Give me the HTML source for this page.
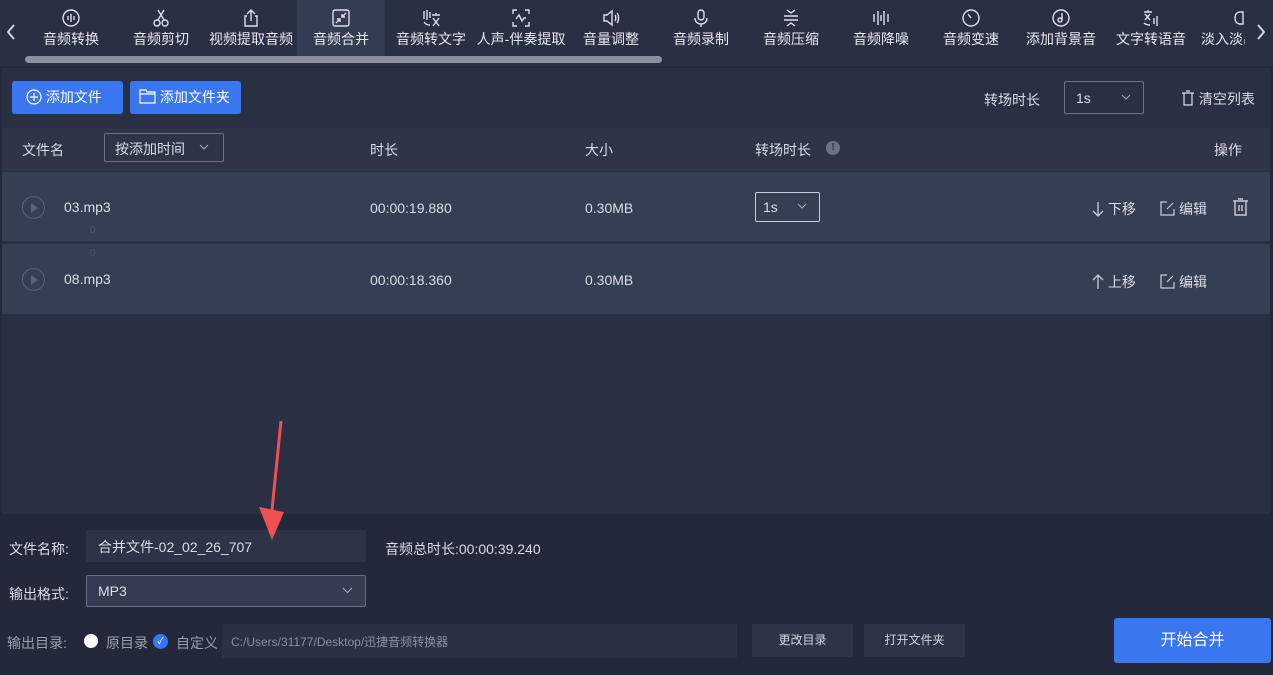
<!DOCTYPE html>
<html><head><meta charset="utf-8"><style>
*{margin:0;padding:0;box-sizing:border-box}
body{width:1273px;height:675px;background:#23283b;font-family:"Liberation Sans","Noto Sans CJK SC",sans-serif;color:#d8dce6;position:relative;overflow:hidden;font-size:14px}
.a{position:absolute}
.nav{left:0;top:0;width:1273px;height:66px;background:#2a3044}
.it{position:absolute;top:0;width:90px;height:56px;text-align:center;font-size:14px;color:#e6e8ee;white-space:nowrap}
.it svg{display:block;margin:8px auto 1px;width:20px;height:20px}
.act{background:#343c52}
.panel{left:2px;top:68px;width:1268px;height:446px;background:#2a3044}
.btn{background:#3a76f0;color:#fff;border-radius:3px;font-size:14px;line-height:33px;height:33px}
.row{left:2px;width:1268px;background:#363e53}
.gb{background:#2e3447;color:#d0d4de;font-size:12px;text-align:center;line-height:33px;height:33px;border-radius:2px}
.chev{position:absolute;right:12px;top:50%;margin-top:-4px}
</style></head><body>
<div class="a nav">
<svg class="a" style="left:6px;top:24px" width="10" height="16" viewBox="0 0 10 16" fill="none" stroke="#dde" stroke-width="1.8"><path d="M8 1L2 8l6 7"/></svg>
<svg class="a" style="left:1256px;top:24px" width="10" height="16" viewBox="0 0 10 16" fill="none" stroke="#dde" stroke-width="1.8"><path d="M2 1l6 7-6 7"/></svg>
<div class="it" style="left:26px"><svg viewBox="0 0 20 20" fill="none" stroke="#dde" stroke-width="1.4"><circle cx="10" cy="10" r="8"/><path d="M7 8v4M10 6v8M13 8v4"/></svg>音频转换</div>
<div class="it" style="left:116px"><svg viewBox="0 0 20 20" fill="none" stroke="#dde" stroke-width="1.4"><circle cx="6" cy="15" r="3"/><circle cx="14" cy="15" r="3"/><path d="M7 12L13 2M13 12L7 2"/></svg>音频剪切</div>
<div class="it" style="left:206px"><svg viewBox="0 0 20 20" fill="none" stroke="#dde" stroke-width="1.4"><path d="M6 8H4v10h12V8h-2M10 13V2M6 6l4-4 4 4"/></svg>视频提取音频</div>
<div class="it act" style="left:297px;width:88px"><svg viewBox="0 0 20 20" fill="none" stroke="#dde" stroke-width="1.4"><rect x="2" y="2" width="16" height="16" rx="2"/><path d="M15 5l-4 4M11 6v3h3M5 15l4-4M6 11h3v3"/></svg>音频合并</div>
<div class="it" style="left:386px"><svg viewBox="0 0 20 20" fill="none" stroke="#dde" stroke-width="1.4"><path d="M3 3v8M6 2v10M9 4v6M3 14c2 3 4 3 6 3M11 7h8M15 5v2M12 10l6 8M18 10l-6 8"/></svg>音频转文字</div>
<div class="it" style="left:476px"><svg viewBox="0 0 20 20" fill="none" stroke="#dde" stroke-width="1.4"><path d="M2 6V2h4M14 2h4v4M2 14v4h4M14 18h4v-4M5 11l3-4 3 6 2-3h2"/></svg>人声-伴奏提取</div>
<div class="it" style="left:566px"><svg viewBox="0 0 20 20" fill="none" stroke="#dde" stroke-width="1.4"><path d="M3 7h3l5-4v14l-5-4H3zM14 7c1 1 1 5 0 6M16 5c2 2 2 8 0 10"/></svg>音量调整</div>
<div class="it" style="left:656px"><svg viewBox="0 0 20 20" fill="none" stroke="#dde" stroke-width="1.4"><rect x="7" y="2" width="6" height="10" rx="3"/><path d="M4 10c0 4 3 6 6 6s6-2 6-6M10 16v3"/></svg>音频录制</div>
<div class="it" style="left:746px"><svg viewBox="0 0 20 20" fill="none" stroke="#dde" stroke-width="1.4"><path d="M6 2l4 3 4-3M3 8h14M3 12h14M6 18l4-3 4 3"/></svg>音频压缩</div>
<div class="it" style="left:836px"><svg viewBox="0 0 20 20" fill="none" stroke="#dde" stroke-width="1.4"><path d="M3 6v8M7 3v14M10 7v6M13 3v14M17 6v8"/></svg>音频降噪</div>
<div class="it" style="left:926px"><svg viewBox="0 0 20 20" fill="none" stroke="#dde" stroke-width="1.4"><circle cx="10" cy="10" r="8"/><path d="M7 6l3 4"/></svg>音频变速</div>
<div class="it" style="left:1016px"><svg viewBox="0 0 20 20" fill="none" stroke="#dde" stroke-width="1.4"><circle cx="10" cy="10" r="8"/><circle cx="9" cy="12" r="2"/><path d="M11 12V5"/></svg>添加背景音</div>
<div class="it" style="left:1106px"><svg viewBox="0 0 20 20" fill="none" stroke="#dde" stroke-width="1.4"><path d="M3 4h8M7 2v2M4 6l5 6M9 6l-5 6M3 15c2 2 4 2 6 2M13 10v6M16 8v10"/></svg>文字转语音</div>
<div class="it" style="left:1196px;width:54px;overflow:hidden;text-align:left;padding-left:5px"><svg viewBox="0 0 20 20" fill="none" stroke="#dde" stroke-width="1.4" style="margin:8px 0 1px 30px"><path d="M8 4c-3 1-4 3-4 6s1 5 4 6M8 4h4v12H8"/></svg><span style="display:inline-block;width:44px;overflow:hidden">淡入淡出</span></div>
<div class="a" style="left:25px;top:56px;width:637px;height:7px;border-radius:4px;background:#8b91a1"></div>
</div>
<div class="a panel"></div>
<div class="a btn" style="left:12px;top:81px;width:111px;padding-left:14px"><svg width="16" height="16" viewBox="0 0 16 16" style="vertical-align:-3px" fill="none" stroke="#fff" stroke-width="1.2"><circle cx="8" cy="8" r="7"/><path d="M8 4v8M4 8h8"/></svg> 添加文件</div>
<div class="a btn" style="left:130px;top:81px;width:111px;padding-left:9px"><svg width="17" height="15" viewBox="0 0 17 15" style="vertical-align:-2px" fill="none" stroke="#fff" stroke-width="1.2"><path d="M1 1h6l1 2h8v11H1zM1 5h15"/></svg> 添加文件夹</div>
<div class="a" style="left:984px;top:90px;font-size:14px">转场时长</div>
<div class="a" style="left:1064px;top:81px;width:80px;height:33px;border:1px solid #6a7184;border-radius:2px;padding:8px 11px;font-size:14px">1s<svg class="chev" width="10" height="7" viewBox="0 0 10 7" fill="none" stroke="#aab" stroke-width="1"><path d="M1 1l4 4 4-4"/></svg></div>
<div class="a" style="left:1181px;top:89px;font-size:14px"><svg width="14" height="16" viewBox="0 0 14 16" style="vertical-align:-2px" fill="none" stroke="#dde" stroke-width="1.2"><path d="M1 3h12M5 1h4M3 3v12h8V3"/></svg> 清空列表</div>
<div class="a" style="left:2px;top:128px;width:1268px;height:43px;background:#2f3548"></div>
<div class="a" style="left:22px;top:140px">文件名</div>
<div class="a" style="left:104px;top:133px;width:120px;height:29px;border:1px solid #6a7184;border-radius:2px;padding:5px 10px">按添加时间<svg class="chev" style="right:14px" width="10" height="7" viewBox="0 0 10 7" fill="none" stroke="#aab" stroke-width="1"><path d="M1 1l4 4 4-4"/></svg></div>
<div class="a" style="left:370px;top:140px">时长</div>
<div class="a" style="left:585px;top:140px">大小</div>
<div class="a" style="left:755px;top:140px">转场时长</div>
<div class="a" style="left:826px;top:141px;width:14px;height:14px;border-radius:7px;background:#6b7284;color:#2a3044;font-size:10px;text-align:center;line-height:14px;font-weight:bold">!</div>
<div class="a" style="left:1214px;top:140px">操作</div>
<div class="a row" style="top:172px;height:69px"></div>
<div class="a row" style="top:244px;height:70px"></div>
<div class="a" style="left:22px;top:196px;width:23px;height:23px;border:1px solid #5b6377;border-radius:50%"><div style="position:absolute;left:8px;top:6px;border-left:7px solid #5b6377;border-top:5px solid transparent;border-bottom:5px solid transparent"></div></div>
<div class="a" style="left:22px;top:268px;width:23px;height:23px;border:1px solid #5b6377;border-radius:50%"><div style="position:absolute;left:8px;top:6px;border-left:7px solid #5b6377;border-top:5px solid transparent;border-bottom:5px solid transparent"></div></div>
<div class="a" style="left:64px;top:199px">03.mp3</div>
<div class="a" style="left:64px;top:271px">08.mp3</div>
<div class="a" style="left:90px;top:225px;font-size:10px;color:#4c5468">0</div>
<div class="a" style="left:90px;top:248px;font-size:10px;color:#4c5468">0</div>
<div class="a" style="left:370px;top:200px">00:00:19.880</div>
<div class="a" style="left:370px;top:272px">00:00:18.360</div>
<div class="a" style="left:585px;top:200px">0.30MB</div>
<div class="a" style="left:585px;top:272px">0.30MB</div>
<div class="a" style="left:755px;top:192px;width:65px;height:30px;border:1px solid #c9ccd6;border-radius:2px;padding:6px 7px">1s<svg class="chev" width="10" height="7" viewBox="0 0 10 7" fill="none" stroke="#aab" stroke-width="1"><path d="M1 1l4 4 4-4"/></svg></div>
<div class="a" style="left:1092px;top:199px"><svg width="12" height="16" viewBox="0 0 12 16" style="vertical-align:-3px" fill="none" stroke="#ccd" stroke-width="1.3"><path d="M6 1v14M1 10l5 5 5-5"/></svg> 下移</div>
<div class="a" style="left:1092px;top:272px"><svg width="12" height="16" viewBox="0 0 12 16" style="vertical-align:-3px" fill="none" stroke="#ccd" stroke-width="1.3"><path d="M6 15V1M1 6l5-5 5 5"/></svg> 上移</div>
<div class="a" style="left:1160px;top:199px"><svg width="15" height="15" viewBox="0 0 15 15" style="vertical-align:-2px;margin-right:4px" fill="none" stroke="#ccd" stroke-width="1.2"><path d="M7 1H1v13h13V8M7 8l6-6"/></svg>编辑</div>
<div class="a" style="left:1160px;top:272px"><svg width="15" height="15" viewBox="0 0 15 15" style="vertical-align:-2px;margin-right:4px" fill="none" stroke="#ccd" stroke-width="1.2"><path d="M7 1H1v13h13V8M7 8l6-6"/></svg>编辑</div>
<div class="a" style="left:1232px;top:198px"><svg width="17" height="18" viewBox="0 0 17 18" fill="none" stroke="#ccd" stroke-width="1.4"><path d="M1 3h15M6 1h5M3 3v14h11V3M7 7v6M10 7v6"/></svg></div>
<div class="a" style="left:9px;top:539px">文件名称:</div>
<div class="a" style="left:86px;top:530px;width:280px;height:32px;background:#2e3447;padding:7px 12px">合并文件-02_02_26_707</div>
<div class="a" style="left:385px;top:539px">音频总时长:00:00:39.240</div>
<div class="a" style="left:9px;top:584px">输出格式:</div>
<div class="a" style="left:86px;top:575px;width:280px;height:32px;background:#353c51;border:1px solid #6a7184;border-radius:2px;padding:7px 11px">MP3<svg class="chev" width="11" height="7" viewBox="0 0 11 7" fill="none" stroke="#aab" stroke-width="1"><path d="M1 1l4.5 4.5L10 1"/></svg></div>
<div class="a" style="left:7px;top:633px;color:#9aa0ae;font-size:14px">输出目录:</div>
<div class="a" style="left:84px;top:634px;width:14px;height:14px;border-radius:50%;background:#fff"></div>
<div class="a" style="left:106px;top:633px;color:#9aa0ae">原目录</div>
<div class="a" style="left:153px;top:634px;width:15px;height:15px;border-radius:50%;background:#3a76f0;color:#fff;font-size:9px;text-align:center;line-height:15px">✓</div>
<div class="a" style="left:176px;top:633px;color:#9aa0ae">自定义</div>
<div class="a" style="left:222px;top:624px;width:515px;height:34px;background:#2b3144;color:#8a90a0;font-size:12px;padding:9px 9px">C:/Users/31177/Desktop/迅捷音频转换器</div>
<div class="a gb" style="left:752px;top:624px;width:101px">更改目录</div>
<div class="a gb" style="left:864px;top:624px;width:101px">打开文件夹</div>
<div class="a" style="left:1114px;top:618px;width:157px;height:45px;background:#3a76f0;border-radius:3px;color:#fff;font-size:16px;text-align:center;line-height:45px">开始合并</div>
<svg class="a" style="left:250px;top:415px" width="40" height="130" viewBox="0 0 40 130"><path d="M31 6L22 95" stroke="#f05050" stroke-width="3"/><path d="M9 92L22 125L34 97Z" fill="#f05050"/></svg>
</body></html>
